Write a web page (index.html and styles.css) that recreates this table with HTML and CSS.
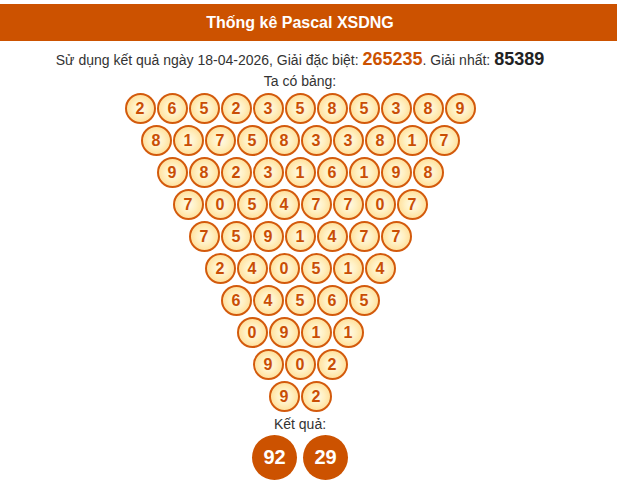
FILE: index.html
```html
<!DOCTYPE html>
<html>
<head>
<meta charset="utf-8">
<link rel="stylesheet" href="styles.css">
</head>
<body>
<div class="page">
  <div class="header"><span class="header-text">Thống kê Pascal XSDNG</span></div>
  <div class="content">
    <div class="info">Sử dụng kết quả ngày 18-04-2026, Giải đặc biệt: <span class="special">265235</span>. Giải nhất: <span class="first">85389</span></div>
    <div class="label">Ta có bảng:</div>
    <div class="triangle">
      <div class="row"><span class="ball">2</span><span class="ball">6</span><span class="ball">5</span><span class="ball">2</span><span class="ball">3</span><span class="ball">5</span><span class="ball">8</span><span class="ball">5</span><span class="ball">3</span><span class="ball">8</span><span class="ball">9</span></div>
      <div class="row"><span class="ball">8</span><span class="ball">1</span><span class="ball">7</span><span class="ball">5</span><span class="ball">8</span><span class="ball">3</span><span class="ball">3</span><span class="ball">8</span><span class="ball">1</span><span class="ball">7</span></div>
      <div class="row"><span class="ball">9</span><span class="ball">8</span><span class="ball">2</span><span class="ball">3</span><span class="ball">1</span><span class="ball">6</span><span class="ball">1</span><span class="ball">9</span><span class="ball">8</span></div>
      <div class="row"><span class="ball">7</span><span class="ball">0</span><span class="ball">5</span><span class="ball">4</span><span class="ball">7</span><span class="ball">7</span><span class="ball">0</span><span class="ball">7</span></div>
      <div class="row"><span class="ball">7</span><span class="ball">5</span><span class="ball">9</span><span class="ball">1</span><span class="ball">4</span><span class="ball">7</span><span class="ball">7</span></div>
      <div class="row"><span class="ball">2</span><span class="ball">4</span><span class="ball">0</span><span class="ball">5</span><span class="ball">1</span><span class="ball">4</span></div>
      <div class="row"><span class="ball">6</span><span class="ball">4</span><span class="ball">5</span><span class="ball">6</span><span class="ball">5</span></div>
      <div class="row"><span class="ball">0</span><span class="ball">9</span><span class="ball">1</span><span class="ball">1</span></div>
      <div class="row"><span class="ball">9</span><span class="ball">0</span><span class="ball">2</span></div>
      <div class="row"><span class="ball">9</span><span class="ball">2</span></div>
    </div>
    <div class="label result-label">Kết quả:</div>
    <div class="results"><span class="result">92</span><span class="result">29</span></div>
  </div>
</div>
</body>
</html>
```
FILE: styles.css
```css
html, body {
  margin: 0;
  padding: 0;
  background: #fff;
}
.page {
  padding-top: 4px;
  font-family: "Liberation Sans", Arial, sans-serif;
  color: #333;
  text-align: center;
}
.header {
  background: #cc5200;
  color: #fff;
  font-weight: bold;
  font-size: 16px;
  height: 37px;
  line-height: 37px;
  padding-right: 17px;
}
.content {
  padding-right: 17px;
}
.info {
  font-size: 14px;
  margin-top: 7px;
  line-height: 22px;
}
.special {
  color: #cc5200;
  font-weight: bold;
  font-size: 18px;
}
.first {
  color: #222;
  font-weight: bold;
  font-size: 18px;
}
.label {
  font-size: 14px;
  line-height: 18px;
  margin-top: 1px;
}
.triangle {
  display: flex;
  flex-direction: column;
  align-items: center;
  margin-top: 3px;
}
.row {
  display: flex;
  justify-content: center;
  gap: 1px;
  height: 32px;
}
.ball {
  box-sizing: border-box;
  width: 31px;
  height: 31px;
  border: 2px solid #d35a0c;
  border-radius: 50%;
  background: radial-gradient(circle at 50% 50%, #fffbe9 0%, #fff0c2 40%, #ffd47f 100%);
  color: #c94e05;
  font-weight: bold;
  font-size: 16px;
  display: flex;
  align-items: center;
  justify-content: center;
}
.result-label {
  margin-top: 2px;
}
.results {
  display: flex;
  justify-content: center;
  gap: 6px;
  margin-top: 2px;
}
.result {
  width: 45px;
  height: 45px;
  border-radius: 50%;
  background: #cc5200;
  color: #fff;
  font-weight: bold;
  font-size: 20px;
  display: flex;
  align-items: center;
  justify-content: center;
}
```
